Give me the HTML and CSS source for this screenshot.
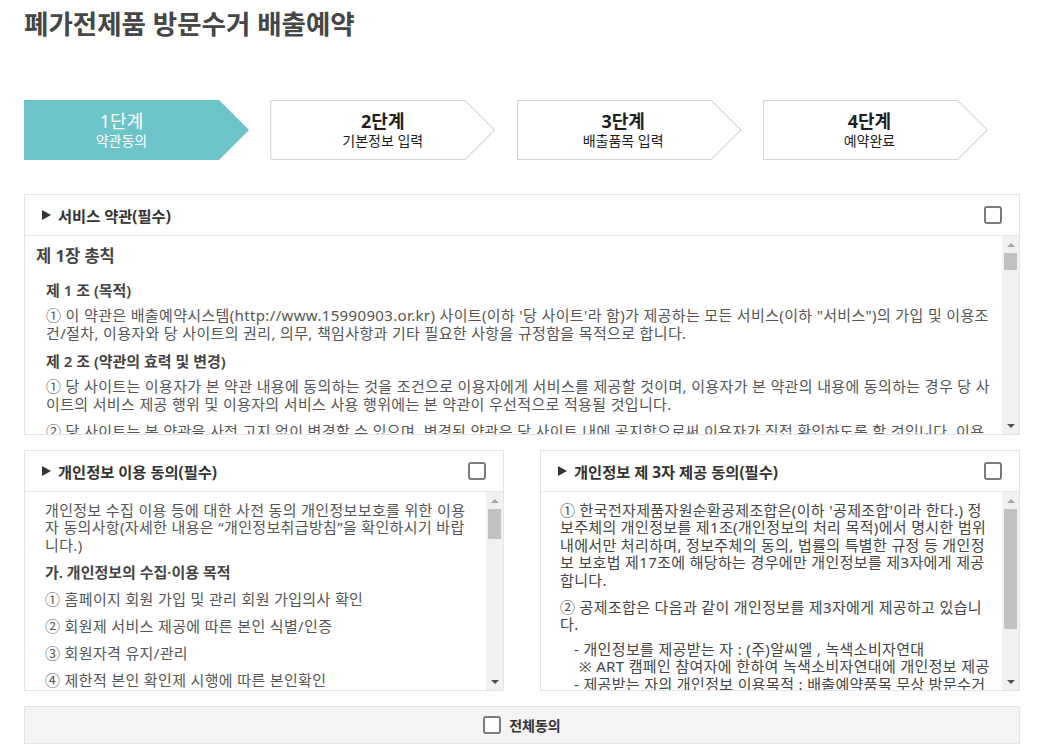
FILE: index.html
```html
<!DOCTYPE html>
<html lang="ko">
<head>
  <meta charset="UTF-8">
  <meta name="viewport" content="width=device-width, initial-scale=1.0">
  <title>폐가전제품 방문수거 배출예약</title>
  <link rel="stylesheet" href="styles.css">
</head>
<body>
  <div class="page">
    <h1 class="page-title">폐가전제품 방문수거 배출예약</h1>

    <ol class="steps">
      <li class="step active"><div class="step-box"><strong>1단계</strong><span>약관동의</span></div></li>
      <li class="step"><div class="step-box"><strong>2단계</strong><span>기본정보 입력</span></div></li>
      <li class="step"><div class="step-box"><strong>3단계</strong><span>배출품목 입력</span></div></li>
      <li class="step"><div class="step-box"><strong>4단계</strong><span>예약완료</span></div></li>
    </ol>

    <!-- 서비스 약관 -->
    <section class="agree-box agree-terms">
      <div class="agree-head">
        <h3>서비스 약관(필수)</h3>
        <input type="checkbox" class="chk" name="agreeTerms">
      </div>
      <div class="agree-body">
        <div class="agree-text">
          <h4 class="chapter">제 1장 총칙</h4>
          <div class="article">
            <h5>제 1 조 (목적)</h5>
            <p>① 이 약관은 배출예약시스템(http://www.15990903.or.kr) 사이트(이하 '당 사이트'라 함)가 제공하는 모든 서비스(이하 "서비스")의 가입 및 이용조건/절차, 이용자와 당 사이트의 권리, 의무, 책임사항과 기타 필요한 사항을 규정함을 목적으로 합니다.</p>
            <h5>제 2 조 (약관의 효력 및 변경)</h5>
            <p>① 당 사이트는 이용자가 본 약관 내용에 동의하는 것을 조건으로 이용자에게 서비스를 제공할 것이며, 이용자가 본 약관의 내용에 동의하는 경우 당 사이트의 서비스 제공 행위 및 이용자의 서비스 사용 행위에는 본 약관이 우선적으로 적용될 것입니다.</p>
            <p>② 당 사이트는 본 약관을 사전 고지 없이 변경할 수 있으며, 변경된 약관은 당 사이트 내에 공지함으로써 이용자가 직접 확인하도록 할 것입니다. 이용자가 변경된 약관에 동의하지 아니하는 경우 본인의 회원등록을 취소(회원탈퇴)할 수 있으며, 계속 사용할 경우에는 약관 변경에 대한 암묵적 동의로 간주됩니다.</p>
            <h5>제 3 조 (약관 외 준칙)</h5>
            <p>① 본 약관에 명시되지 않은 사항은 전기통신기본법, 전기통신사업법, 정보통신망 이용촉진 및 정보보호 등에 관한 법률 및 기타 관련 법령의 규정에 따릅니다.</p>
          </div>
        </div>
        <div class="scrollbar">
          <span class="sb-up"></span>
          <span class="sb-track"><span class="sb-thumb" style="height:17px"></span></span>
          <span class="sb-down"></span>
        </div>
      </div>
    </section>

    <div class="agree-row">
      <!-- 개인정보 이용 동의 -->
      <section class="agree-box">
        <div class="agree-head">
          <h3>개인정보 이용 동의(필수)</h3>
          <input type="checkbox" class="chk" name="agreePrivacy">
        </div>
        <div class="agree-body">
          <div class="agree-text">
            <p>개인정보 수집 이용 등에 대한 사전 동의 개인정보보호를 위한 이용자 동의사항(자세한 내용은 “개인정보취급방침”을 확인하시기 바랍니다.)</p>
            <h5>가. 개인정보의 수집·이용 목적</h5>
            <p>① 홈페이지 회원 가입 및 관리 회원 가입의사 확인</p>
            <p>② 회원제 서비스 제공에 따른 본인 식별/인증</p>
            <p>③ 회원자격 유지/관리</p>
            <p>④ 제한적 본인 확인제 시행에 따른 본인확인</p>
            <p>⑤ 서비스 부정이용 방지</p>
          </div>
          <div class="scrollbar">
            <span class="sb-up"></span>
            <span class="sb-track"><span class="sb-thumb" style="height:30px"></span></span>
            <span class="sb-down"></span>
          </div>
        </div>
      </section>

      <!-- 개인정보 제3자 제공 동의 -->
      <section class="agree-box">
        <div class="agree-head">
          <h3>개인정보 제 3자 제공 동의(필수)</h3>
          <input type="checkbox" class="chk" name="agreeThird">
        </div>
        <div class="agree-body">
          <div class="agree-text dark">
            <p>① 한국전자제품자원순환공제조합은(이하 '공제조합'이라 한다.) 정보주체의 개인정보를 제1조(개인정보의 처리 목적)에서 명시한 범위 내에서만 처리하며, 정보주체의 동의, 법률의 특별한 규정 등 개인정보 보호법 제17조에 해당하는 경우에만 개인정보를 제3자에게 제공합니다.</p>
            <p>② 공제조합은 다음과 같이 개인정보를 제3자에게 제공하고 있습니다.</p>
            <ul class="dash-list">
              <li>- 개인정보를 제공받는 자 : (주)알씨엘 , 녹색소비자연대<br><span class="note">※ ART 캠페인 참여자에 한하여 녹색소비자연대에 개인정보 제공</span></li>
              <li>- 제공받는 자의 개인정보 이용목적 : 배출예약품목 무상 방문수거</li>
            </ul>
          </div>
          <div class="scrollbar">
            <span class="sb-up"></span>
            <span class="sb-track"><span class="sb-thumb" style="height:120px"></span></span>
            <span class="sb-down"></span>
          </div>
        </div>
      </section>
    </div>

    <div class="agree-all">
      <label><input type="checkbox" class="chk" name="agreeAll"> 전체동의</label>
    </div>
  </div>
</body>
</html>
```

FILE: styles.css
```css
body {
  margin: 0;
  background: #fff;
  font-family: "Noto Sans", "Noto Sans CJK KR", sans-serif;
  color: #555;
}
.page {
  padding: 0 21px 0 24px;
}
.page-title {
  margin: 0;
  padding-top: 5px;
  font-size: 26.5px;
  line-height: 38px;
  font-weight: bold;
  color: #464646;
}

/* 단계 표시 */
.steps {
  list-style: none;
  margin: 57px 0 0 0;
  padding: 0;
  display: flex;
  gap: 21.3px;
}
.step {
  width: 225px;
  height: 60px;
  padding: 1px;
  box-sizing: border-box;
  background: #d3d3d3;
  clip-path: polygon(0 0, calc(100% - 30px) 0, 100% 50%, calc(100% - 30px) 100%, 0 100%);
}
.step-box {
  height: 100%;
  padding-right: 12px;
  background: #fff;
  color: #1e1e1e;
  display: flex;
  flex-direction: column;
  align-items: center;
  justify-content: center;
  clip-path: polygon(0 0, calc(100% - 29.4px) 0, calc(100% - 0.4px) 50%, calc(100% - 29.4px) 100%, 0 100%);
}
.step:nth-child(2) .step-box {
  padding-right: 0;
}
.step-box strong {
  font-size: 18px;
  line-height: 22px;
}
.step-box span {
  font-size: 14px;
  line-height: 18px;
}
.step.active,
.step.active .step-box {
  background: #6cc4c9;
  color: #fff;
}
.step.active .step-box {
  padding-right: 30px;
}
.step.active strong {
  font-weight: normal;
}

/* 약관 박스 */
.agree-box {
  border: 1px solid #e4e4e4;
  background: #fff;
}
.agree-terms {
  margin-top: 34px;
}
.agree-head {
  height: 40px;
  padding: 0 17px;
  border-bottom: 1px solid #e8e8e8;
  display: flex;
  align-items: center;
  justify-content: space-between;
}
.agree-head h3 {
  margin: 0;
  font-size: 15.3px;
  color: #333;
  display: flex;
  align-items: center;
}
.agree-head h3::before {
  content: "";
  border-left: 9px solid #333;
  border-top: 5px solid transparent;
  border-bottom: 5px solid transparent;
  margin-right: 7px;
}
.chk {
  appearance: none;
  margin: 0;
  width: 18px;
  height: 18px;
  border: 2px solid #7a7a7a;
  border-radius: 3px;
  background: #fff;
  box-sizing: border-box;
}

.agree-body {
  height: 198px;
  display: flex;
  overflow: hidden;
}
.agree-text {
  flex: 1;
  min-width: 0;
  overflow: hidden;
  padding: 10px 16px 0 20px;
  font-size: 15px;
  line-height: 17.4px;
}
.agree-text p,
.agree-text li {
  letter-spacing: 0.35px;
}
.agree-text p {
  margin: 0 0 9.6px 0;
}
.agree-text h5 {
  margin: 0 0 9.6px 0;
  font-size: 15px;
  font-weight: 600;
  color: #444;
}
.agree-text.dark {
  padding-left: 19px;
  padding-right: 12px;
  color: #444;
}
.agree-terms .agree-text {
  padding: 10px 8px 0 11px;
  line-height: 18.2px;
}
.agree-terms .agree-text h5 {
  margin-bottom: 7px;
}
.agree-terms .agree-text p {
  margin-bottom: 9px;
}
.chapter {
  margin: 0 0 15px 0;
  font-size: 16.5px;
  line-height: 20px;
  color: #444;
}
.article {
  padding-left: 10px;
}
.dash-list {
  list-style: none;
  margin: -2px 0 0 0;
  padding: 0 0 0 14px;
}
.dash-list .note {
  padding-left: 5px;
}

/* 스크롤바 */
.scrollbar {
  width: 17px;
  flex-shrink: 0;
  background: #f1f1f1;
  display: flex;
  flex-direction: column;
}
.sb-up,
.sb-down {
  height: 17px;
  display: flex;
  align-items: center;
  justify-content: center;
}
.sb-up::before,
.sb-down::before {
  content: "";
  border-left: 4px solid transparent;
  border-right: 4px solid transparent;
}
.sb-up::before {
  border-bottom: 4px solid #a3a3a3;
}
.sb-down::before {
  border-top: 4px solid #505050;
}
.sb-track {
  flex: 1;
  padding: 0 2px;
}
.sb-thumb {
  display: block;
  background: #c1c1c1;
}

.agree-row {
  margin-top: 15px;
  display: flex;
  justify-content: space-between;
}
.agree-row .agree-box {
  width: 480px;
  box-sizing: border-box;
}

/* 전체동의 */
.agree-all {
  margin-top: 15px;
  height: 38px;
  border: 1px solid #e4e4e4;
  background: #f4f4f4;
  box-sizing: border-box;
  display: flex;
  align-items: center;
  justify-content: center;
}
.agree-all label {
  display: flex;
  align-items: center;
  gap: 8px;
  font-size: 14px;
  font-weight: bold;
  color: #333;
}
```
